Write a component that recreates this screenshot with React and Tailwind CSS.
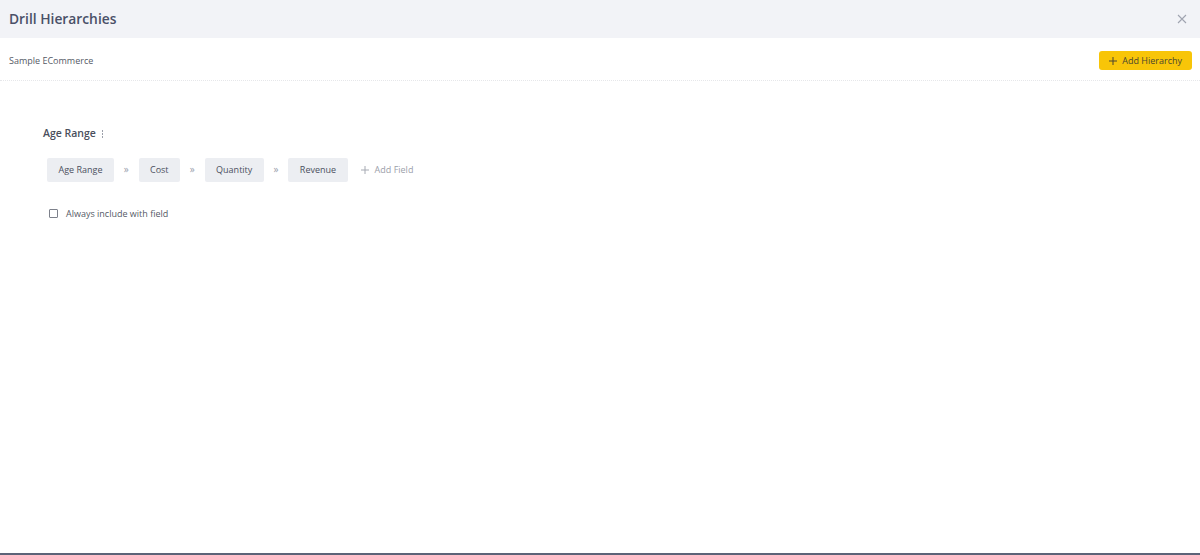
import React from "react";

function Chip({ children }) {
  return (
    <div className="h-6 px-[11.5px] flex items-center bg-[#eceef2] text-[9px] text-[#4b5060] rounded-[2px]">
      {children}
    </div>
  );
}

function Sep() {
  return <span className="w-[24.5px] text-center text-[10px] text-[#9aa0ad]">»</span>;
}

export default function App() {
  return (
    <div className="w-[1200px] h-[555px] bg-white flex flex-col font-['Open_Sans',sans-serif] border-b-2 border-[#5c6378]">
      <div className="h-[38px] bg-[#f2f3f7] flex items-center justify-between pl-[9px] pr-[10px]">
        <h1 className="text-[13.8px] font-semibold text-[#4a5068]">Drill Hierarchies</h1>
        <svg width="10" height="10" viewBox="0 0 10 10" className="mr-[3px]">
          <path d="M1 1L9 9M9 1L1 9" stroke="#a0a4b0" strokeWidth="1.1" />
        </svg>
      </div>
      <div className="h-[43px] pt-[3px] flex items-center justify-between pl-[9px] pr-[8px] border-b border-dotted border-[#e6e7ea]">
        <span className="text-[9px] text-[#555a66]">Sample ECommerce</span>
        <button className="h-[19px] px-[10px] flex items-center gap-[5px] bg-[#f8c508] rounded-[3px] text-[9px] text-[#4a4530]">
          <svg width="8" height="8" viewBox="0 0 8 8">
            <path d="M4 0V8M0 4H8" stroke="#4a4530" strokeWidth="1" />
          </svg>
          Add Hierarchy
        </button>
      </div>
      <div className="flex-1 pl-[43px] pt-[45px]">
        <div className="flex items-center gap-[5px]">
          <span className="text-[10.5px] font-semibold text-[#4a4f5c]">Age Range</span>
          <span className="flex flex-col gap-[1.5px] ml-[1px]">
            <span className="w-[1.5px] h-[1.5px] bg-[#9ca0aa]" />
            <span className="w-[1.5px] h-[1.5px] bg-[#9ca0aa]" />
            <span className="w-[1.5px] h-[1.5px] bg-[#9ca0aa]" />
          </span>
        </div>
        <div className="flex items-center mt-[16px] ml-[4px]">
          <Chip>Age Range</Chip>
          <Sep />
          <Chip>Cost</Chip>
          <Sep />
          <Chip>Quantity</Chip>
          <Sep />
          <Chip>Revenue</Chip>
          <div className="ml-[13px] flex items-center gap-[6px] text-[9px] text-[#9ba0aa]">
            <svg width="8" height="8" viewBox="0 0 8 8">
              <path d="M4 0V8M0 4H8" stroke="#a6aab3" strokeWidth="1" />
            </svg>
            Add Field
          </div>
        </div>
        <div className="flex items-center gap-[8px] mt-[25px] ml-[6px]">
          <span className="w-[9px] h-[9px] border border-[#7d818b] rounded-[1px] bg-white" />
          <span className="text-[9px] text-[#555a66]">Always include with field</span>
        </div>
      </div>
    </div>
  );
}
